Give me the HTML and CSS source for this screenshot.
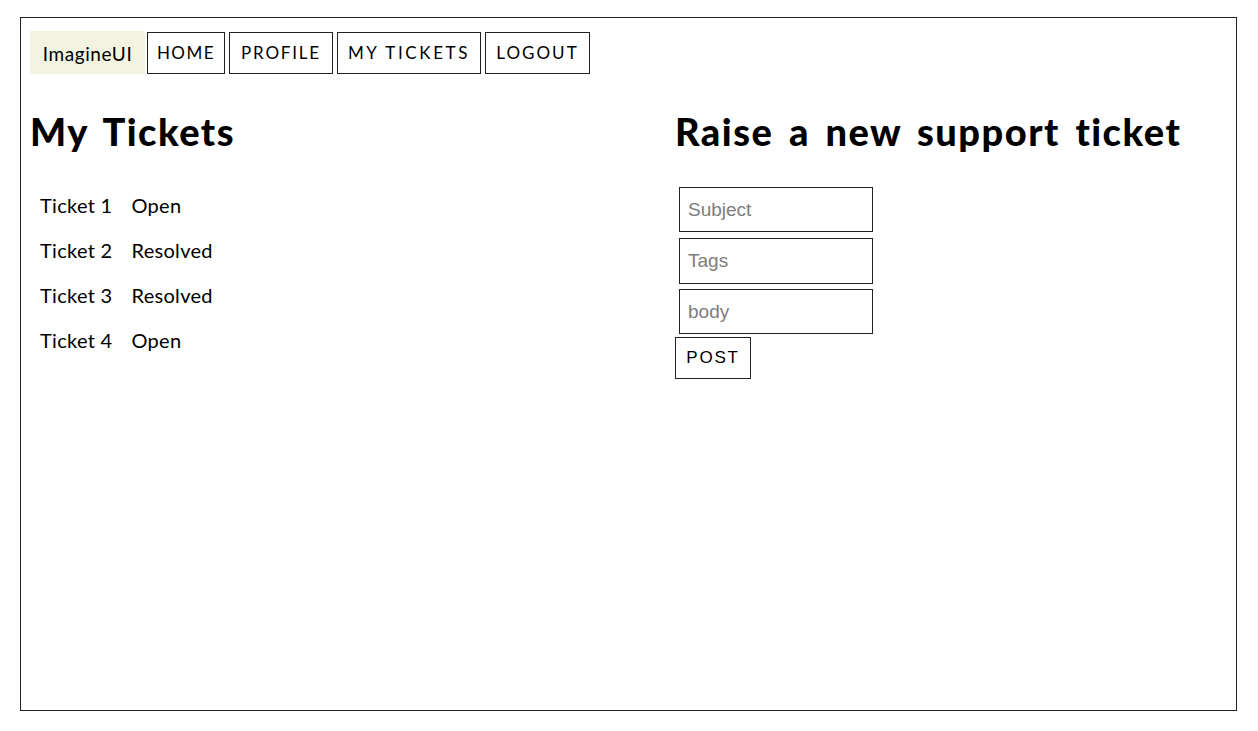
FILE: index.html
```html
<!DOCTYPE html>
<html>
<head>
<meta charset="utf-8">
<link rel="stylesheet" href="styles.css">
</head>
<body>
<div class="frame">
  <nav class="nav">
    <span class="brand">ImagineUI</span>
    <a class="navbtn">HOME</a>
    <a class="navbtn">PROFILE</a>
    <a class="navbtn">MY TICKETS</a>
    <a class="navbtn">LOGOUT</a>
  </nav>
  <div class="cols">
    <section class="left">
      <h1>My Tickets</h1>
      <ul class="tickets">
        <li><span>Ticket 1</span><span>Open</span></li>
        <li><span>Ticket 2</span><span>Resolved</span></li>
        <li><span>Ticket 3</span><span>Resolved</span></li>
        <li><span>Ticket 4</span><span>Open</span></li>
      </ul>
    </section>
    <section class="right">
      <h1>Raise a new support ticket</h1>
      <form class="form">
        <input class="field" placeholder="Subject">
        <input class="field" placeholder="Tags">
        <input class="field" placeholder="body">
        <button type="button" class="post">POST</button>
      </form>
    </section>
  </div>
</div>
</body>
</html>
```

FILE: styles.css
```css
html, body { margin: 0; padding: 0; background: #fff; }
body { font-family: "Lato", "DejaVu Sans", sans-serif; color: #000; }
.frame {
  margin: 17px 0 0 20px;
  width: 1217px;
  height: 694px;
  border: 1.5px solid #222;
  box-sizing: border-box;
  padding: 13px 0 0 9px;
}
.nav { display: flex; align-items: center; gap: 4px; height: 43px; }
.brand {
  background: #f3f3e1;
  height: 43px;
  width: 115px;
  margin-right: -2px;
  display: flex; align-items: center; justify-content: center;
  font-size: 19px;
  letter-spacing: 0.6px;
  padding-top: 2px;
  box-sizing: border-box;
}
.navbtn {
  height: 42px;
  border: 1.5px solid #222;
  box-sizing: border-box;
  display: flex; align-items: center; justify-content: center;
  font-size: 17px;
  letter-spacing: 1.5px;
}
.navbtn:nth-child(2) { width: 78px; }
.navbtn:nth-child(3) { width: 104px; letter-spacing: 1.8px; }
.navbtn:nth-child(4) { width: 144px; letter-spacing: 2.6px; }
.navbtn:nth-child(5) { width: 105px; letter-spacing: 2px; }
.cols { display: grid; grid-template-columns: 645px 1fr; }
h1 { font-size: 38px; font-weight: 900; margin: 35px 0 0 0; line-height: 44px; letter-spacing: 1.5px; word-spacing: 5px; }
.tickets { list-style: none; margin: 41px 0 0 10px; padding: 0; }
.tickets li { height: 45px; display: flex; gap: 19px; font-size: 20px; line-height: 22px; letter-spacing: 0.3px; }
.form { display: flex; flex-direction: column; margin-top: 34px; }
.field {
  width: 194px; height: 45px; box-sizing: border-box;
  border: 1.5px solid #222;
  margin: 0 0 6px 4px;
  padding: 0 8px;
  font-family: "Liberation Sans", Arial, sans-serif;
  font-size: 19px;
  outline: none;
}
.field:nth-child(2) { height: 46px; margin-bottom: 5px; }
.field::placeholder { color: #7d7d7d; }
.post {
  width: 76px; height: 42px; box-sizing: border-box;
  border: 1.5px solid #222; background: #fff;
  margin-top: -3px;
  font-family: "Liberation Sans", Arial, sans-serif;
  font-size: 17px; letter-spacing: 1.8px;
  padding: 0;
}
```
